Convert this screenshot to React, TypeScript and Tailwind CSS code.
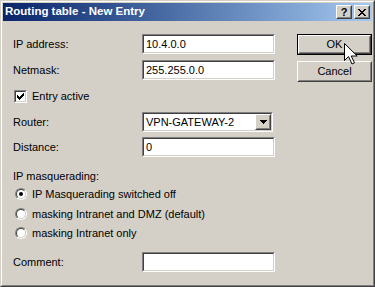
import React from "react";

const font = "font-['Liberation_Sans',Arial,sans-serif]";

function Sunken({ children, className = "" }: { children?: React.ReactNode; className?: string }) {
  return (
    <div className={`border border-t-[#808080] border-l-[#808080] border-b-white border-r-white ${className}`}>
      <div className="h-full border border-t-[#404040] border-l-[#404040] border-b-[#d4d0c8] border-r-[#d4d0c8] bg-white flex items-center">
        {children}
      </div>
    </div>
  );
}

function Edit({ value }: { value?: string }) {
  return (
    <Sunken className="w-[133px] h-[20px]">
      <span className="pl-[2px] leading-none">{value}</span>
    </Sunken>
  );
}

function Raised({ children, className = "" }: { children?: React.ReactNode; className?: string }) {
  return (
    <div className={`border border-t-white border-l-white border-b-[#404040] border-r-[#404040] bg-[#d4d0c8] ${className}`}>
      <div className="h-full border border-t-[#d4d0c8] border-l-[#d4d0c8] border-b-[#808080] border-r-[#808080] flex items-center justify-center">
        {children}
      </div>
    </div>
  );
}

function Row({ label, children, className = "" }: { label: string; children: React.ReactNode; className?: string }) {
  return (
    <div className={`flex items-center h-[20px] ${className}`}>
      <span className="w-[129px] leading-none">{label}</span>
      {children}
    </div>
  );
}

function Radio({ label, checked, className = "" }: { label: string; checked?: boolean; className?: string }) {
  return (
    <div className={`flex items-center h-[14px] ${className}`}>
      <div className="ml-[2px] w-[12px] h-[12px] rounded-full border border-t-[#808080] border-l-[#808080] border-b-white border-r-white">
        <div className="w-full h-full rounded-full border border-t-[#404040] border-l-[#404040] border-b-[#d4d0c8] border-r-[#d4d0c8] bg-white flex items-center justify-center">
          {checked && <div className="w-[4px] h-[4px] rounded-full bg-black" />}
        </div>
      </div>
      <span className="ml-[5px] leading-none">{label}</span>
    </div>
  );
}

export default function App() {
  return (
    <div className={`relative w-[375px] h-[287px] ${font} text-[11px] text-black`}>
      <div className="w-full h-full border border-t-[#d4d0c8] border-l-[#d4d0c8] border-b-[#404040] border-r-[#404040]">
        <div className="w-full h-full border border-t-white border-l-white border-b-[#808080] border-r-[#808080] bg-[#d4d0c8] p-[1px] flex flex-col">
          {/* Title bar */}
          <div className="h-[18px] flex items-center bg-gradient-to-r from-[#0a246a] to-[#a6caf0] pl-[2px] pr-[2px]">
            <span className="text-white font-bold text-[11.5px] leading-none flex-1">Routing table - New Entry</span>
            <Raised className="w-[16px] h-[14px]">
              <span className="font-bold text-[11px] leading-none">?</span>
            </Raised>
            <Raised className="w-[16px] h-[14px] ml-[2px]">
              <svg width="8" height="7" viewBox="0 0 8 7">
                <path d="M0 0h2v1h1v1h2V1h1V0h2v1H7v1H6v1H5v1h1v1h1v1h1v1H6V6H5V5H3v1H2v1H0V6h1V5h1V4h1V3H2V2H1V1H0z" fill="#000" />
              </svg>
            </Raised>
          </div>

          {/* Body */}
          <div className="flex pl-[10px] pt-[13px]">
            <div className="flex flex-col w-[274px]">
              <Row label="IP address:">
                <Edit value="10.4.0.0" />
              </Row>
              <Row label="Netmask:" className="mt-[6px]">
                <Edit value="255.255.0.0" />
              </Row>
              <div className="flex items-center h-[13px] mt-[10px]">
                <div className="ml-[1px] w-[13px] h-[13px] border border-t-[#808080] border-l-[#808080] border-b-white border-r-white">
                  <div className="w-full h-full border border-t-[#404040] border-l-[#404040] border-b-[#d4d0c8] border-r-[#d4d0c8] bg-white flex items-center justify-center">
                    <svg width="7" height="7" viewBox="0 0 7 7">
                      <path d="M0 2h1v1h1v1h1V3h1V2h1V1h1V0h1v3H6v1H5v1H4v1H3v1H2V6H1V5H0z" fill="#000" />
                    </svg>
                  </div>
                </div>
                <span className="ml-[5px] leading-none">Entry active</span>
              </div>
              <Row label="Router:" className="mt-[9px]">
                <Sunken className="w-[131px] h-[20px]">
                  <span className="pl-[2px] leading-none flex-1">VPN-GATEWAY-2</span>
                  <Raised className="w-[16px] h-full">
                    <svg width="7" height="4" viewBox="0 0 7 4">
                      <path d="M0 0h7v1H6v1H5v1H4v1H3V3H2V2H1V1H0z" fill="#000" />
                    </svg>
                  </Raised>
                </Sunken>
              </Row>
              <Row label="Distance:" className="mt-[5px]">
                <Edit value="0" />
              </Row>
              <div className="h-[14px] mt-[12px] flex items-center leading-none">IP masquerading:</div>
              <Radio label="IP Masquerading switched off" checked className="mt-[4px]" />
              <Radio label="masking Intranet and DMZ (default)" className="mt-[6px]" />
              <Radio label="masking Intranet only" className="mt-[5px]" />
              <Row label="Comment:" className="mt-[12px]">
                <Edit />
              </Row>
            </div>

            <div className="flex flex-col ml-[10px]">
              <div className="w-[75px] h-[21px] border border-black">
                <Raised className="w-full h-full">
                  <span className="leading-none">OK</span>
                </Raised>
              </div>
              <Raised className="w-[75px] h-[21px] mt-[6px]">
                <span className="leading-none">Cancel</span>
              </Raised>
            </div>
          </div>
        </div>
      </div>

      {/* Mouse pointer */}
      <svg className="absolute left-[344px] top-[43px]" width="14" height="23" viewBox="0 0 14 23">
        <path d="M0.5 0.5v17l4-4 3.5 7.5 2.5-1.2-3.3-6.8h6z" fill="#fff" stroke="#000" strokeWidth="1" />
      </svg>
    </div>
  );
}
